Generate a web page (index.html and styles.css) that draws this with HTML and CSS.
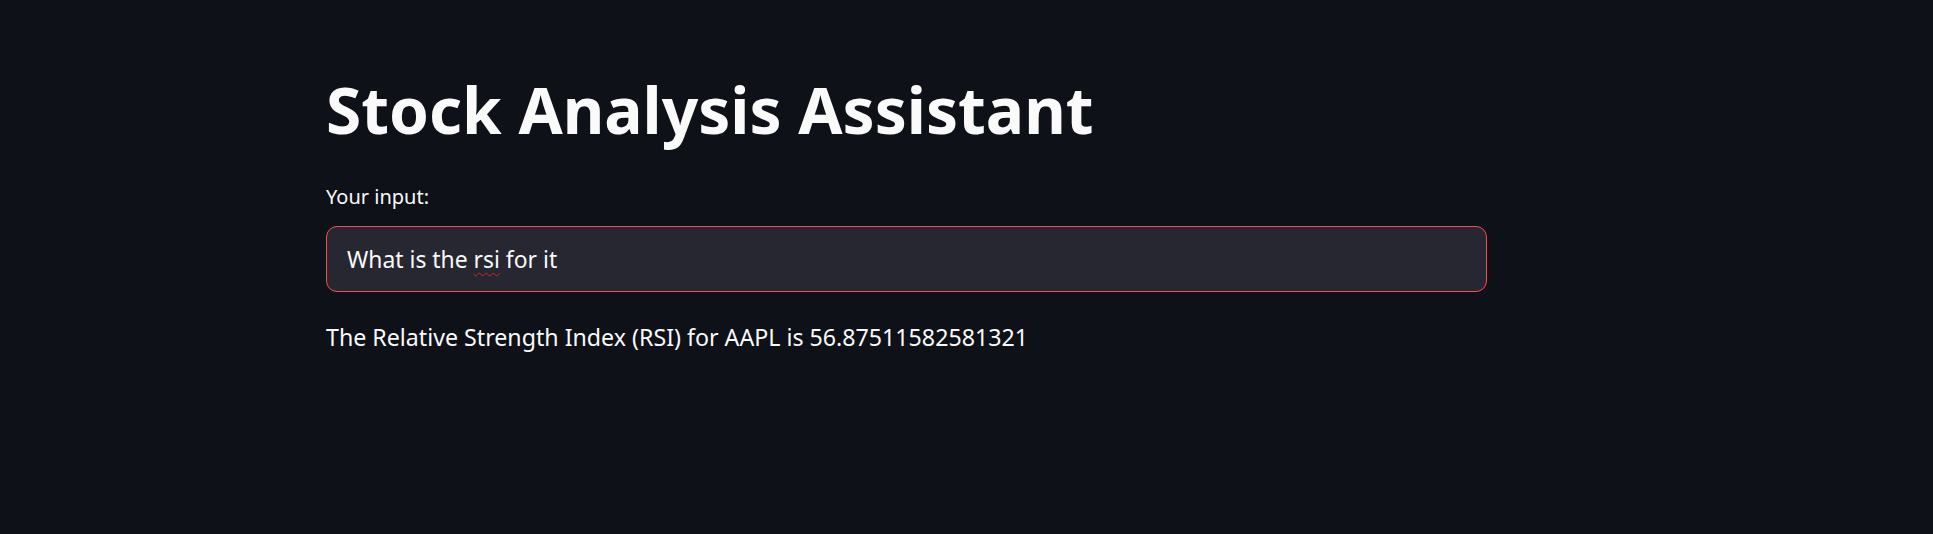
FILE: index.html
```html
<!DOCTYPE html>
<html lang="en">
<head>
<meta charset="utf-8">
<title>Stock Analysis Assistant</title>
<link rel="stylesheet" href="styles.css">
</head>
<body>
<main class="main">
  <h1 class="title">Stock Analysis Assistant</h1>
  <label class="label">Your input:</label>
  <div class="input-box"><span class="input-text">What is the <span class="misspelled">rsi</span> for it</span></div>
  <p class="answer">The Relative Strength Index (RSI) for AAPL is 56.87511582581321</p>
</main>
</body>
</html>
```
FILE: styles.css
```css
html, body { margin: 0; padding: 0; }
body {
  background: #0e1117;
  color: #fafafa;
  font-family: "Noto Sans", Lato, sans-serif;
  width: 1933px;
  height: 534px;
  overflow: hidden;
}
.main {
  display: flex;
  flex-direction: column;
  align-items: flex-start;
  padding: 70px 0 0 326px;
  width: 1161px;
}
.title {
  margin: 0;
  font-size: 64px;
  font-weight: 700;
  line-height: 80px;
}
.label {
  margin-top: 33px;
  font-size: 20px;
  line-height: 28px;
}
.input-box {
  margin-top: 15px;
  box-sizing: border-box;
  width: 1161px;
  height: 66px;
  background: #262730;
  border: 1.5px solid #ff4b4b;
  border-radius: 11px;
  display: flex;
  align-items: center;
  padding-left: 20px;
}
.input-text { font-size: 22.9px; }
.misspelled {
  text-decoration: underline wavy #e0201f;
  text-decoration-thickness: 1px;
  text-underline-offset: 4px;
}
.answer {
  margin: 29px 0 0;
  font-size: 23.2px;
  line-height: 32px;
}
```
